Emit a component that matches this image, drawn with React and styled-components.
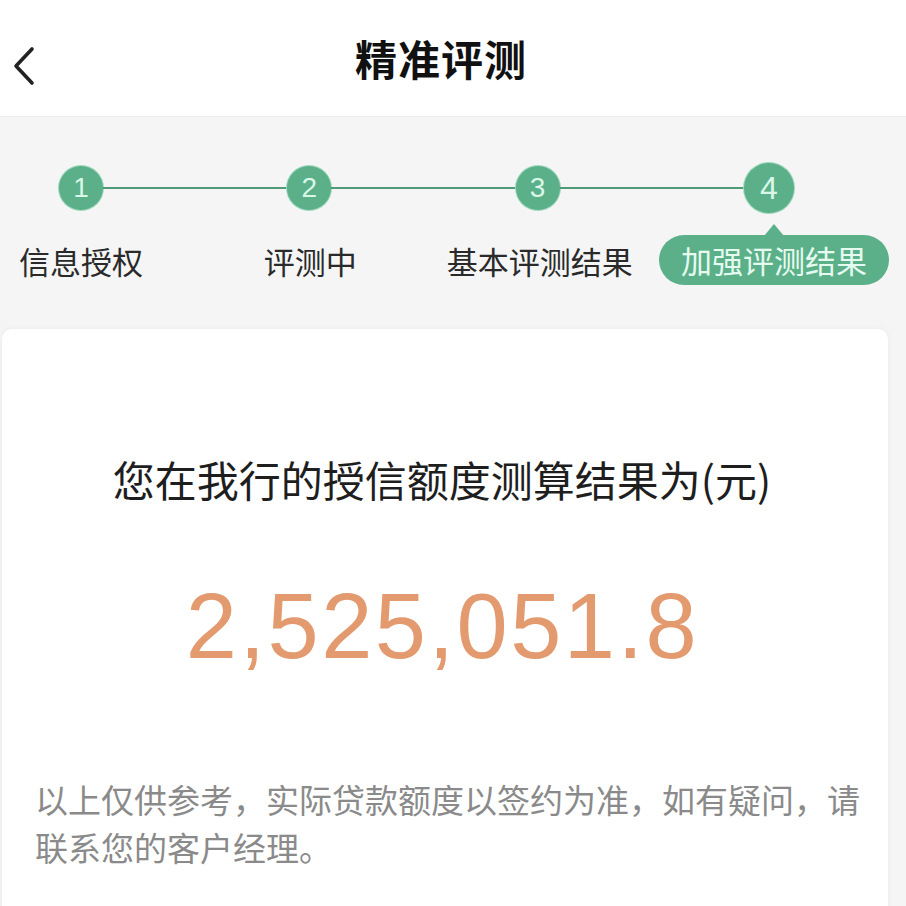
import React from "react";
import styled, { createGlobalStyle } from "styled-components";

const GlobalStyle = createGlobalStyle`
  html, body {
    margin: 0;
    padding: 0;
    background: #f5f5f5;
  }
  body {
    font-family: "Noto Sans CJK SC", "Noto Sans", sans-serif;
  }
`;

const Page = styled.div`
  width: 906px;
  height: 906px;
  overflow: hidden;
  background: #f5f5f5;
`;

const Header = styled.div`
  height: 116px;
  background: #fff;
  border-bottom: 1px solid #ececec;
  display: flex;
  align-items: center;
  justify-content: center;
  position: relative;
`;

const Back = styled.div`
  position: absolute;
  left: 10px;
  top: 46px;
  width: 28px;
  height: 40px;
  display: flex;
`;

const Title = styled.h1`
  margin: 0;
  margin-left: -24px;
  font-size: 42px;
  font-weight: 700;
  color: #111;
  letter-spacing: 1px;
  line-height: 1;
`;

const StepsBand = styled.div`
  height: 212px;
  padding-top: 45px;
  box-sizing: border-box;
`;

const Track = styled.div`
  display: flex;
  align-items: center;
  padding: 0 112px 0 59px;
  height: 52px;
`;

const Dot = styled.div`
  width: ${p => (p.big ? 50 : 44)}px;
  height: ${p => (p.big ? 50 : 44)}px;
  border-radius: 50%;
  background: #5bb089;
  box-shadow: 0 0 0 1px #9ed8bd;
  color: #d9f7e8;
  display: flex;
  align-items: center;
  justify-content: center;
  font-family: "Liberation Sans", Arial, sans-serif;
  font-size: ${p => (p.big ? 32 : 28)}px;
  flex-shrink: 0;
`;

const Connector = styled.div`
  flex: 1;
  height: 2px;
  background: #4f9b78;
`;

const Labels = styled.div`
  display: flex;
  justify-content: space-between;
  padding: 0 57px 0 1px;
  margin-top: 21px;
`;

const LabelCol = styled.div`
  width: 160px;
  display: flex;
  justify-content: center;
  height: 50px;
  align-items: center;
`;

const Label = styled.span`
  font-size: 31px;
  color: #2a2a2a;
  white-space: nowrap;
`;

const Pill = styled.span`
  position: relative;
  white-space: nowrap;
  font-size: 31px;
  color: #e6fbf0;
  background: #5bb089;
  border-radius: 25px;
  height: 50px;
  line-height: 50px;
  padding: 0 22px;
  margin-left: 10px;

  &::before {
    content: "";
    position: absolute;
    left: 50%;
    top: -11px;
    margin-left: -10px;
    border-left: 10px solid transparent;
    border-right: 10px solid transparent;
    border-bottom: 12px solid #5bb089;
  }
`;

const Card = styled.div`
  margin: 0 18px 0 2px;
  background: #fff;
  border-radius: 10px 10px 0 0;
  box-shadow: 0 0 6px rgba(0, 0, 0, 0.05);
  padding: 120px 2px 0 33px;
  height: 700px;
  box-sizing: border-box;
`;

const Headline = styled.div`
  text-align: center;
  font-size: 42px;
  line-height: 60px;
  color: #1e1e1e;
  margin-right: 37px;
  white-space: nowrap;
`;

const Amount = styled.div`
  margin-top: 67px;
  text-align: center;
  font-family: "Liberation Sans", Arial, sans-serif;
  font-size: 92px;
  line-height: 100px;
  letter-spacing: 2.5px;
  color: #e29a6e;
  margin-right: 36px;
`;

const Note = styled.p`
  margin: 99px 0 0;
  font-size: 33px;
  line-height: 48px;
  color: #8a8a8a;
`;

const steps = ["信息授权", "评测中", "基本评测结果", "加强评测结果"];

export default function App() {
  return (
    <Page>
      <GlobalStyle />
      <Header>
        <Back>
          <svg width="28" height="40" viewBox="0 0 28 40">
            <path
              d="M22 3 L6 20 L22 37"
              fill="none"
              stroke="#222"
              strokeWidth="3.6"
              strokeLinecap="round"
              strokeLinejoin="round"
            />
          </svg>
        </Back>
        <Title>精准评测</Title>
      </Header>
      <StepsBand>
        <Track>
          {steps.map((s, i) => (
            <React.Fragment key={s}>
              {i > 0 && <Connector />}
              <Dot big={i === 3}>{i + 1}</Dot>
            </React.Fragment>
          ))}
        </Track>
        <Labels>
          {steps.map((s, i) => (
            <LabelCol key={s}>
              {i === 3 ? <Pill>{s}</Pill> : <Label>{s}</Label>}
            </LabelCol>
          ))}
        </Labels>
      </StepsBand>
      <Card>
        <Headline>您在我行的授信额度测算结果为(元)</Headline>
        <Amount>2,525,051.8</Amount>
        <Note>以上仅供参考，实际贷款额度以签约为准，如有疑问，请联系您的客户经理。</Note>
      </Card>
    </Page>
  );
}
